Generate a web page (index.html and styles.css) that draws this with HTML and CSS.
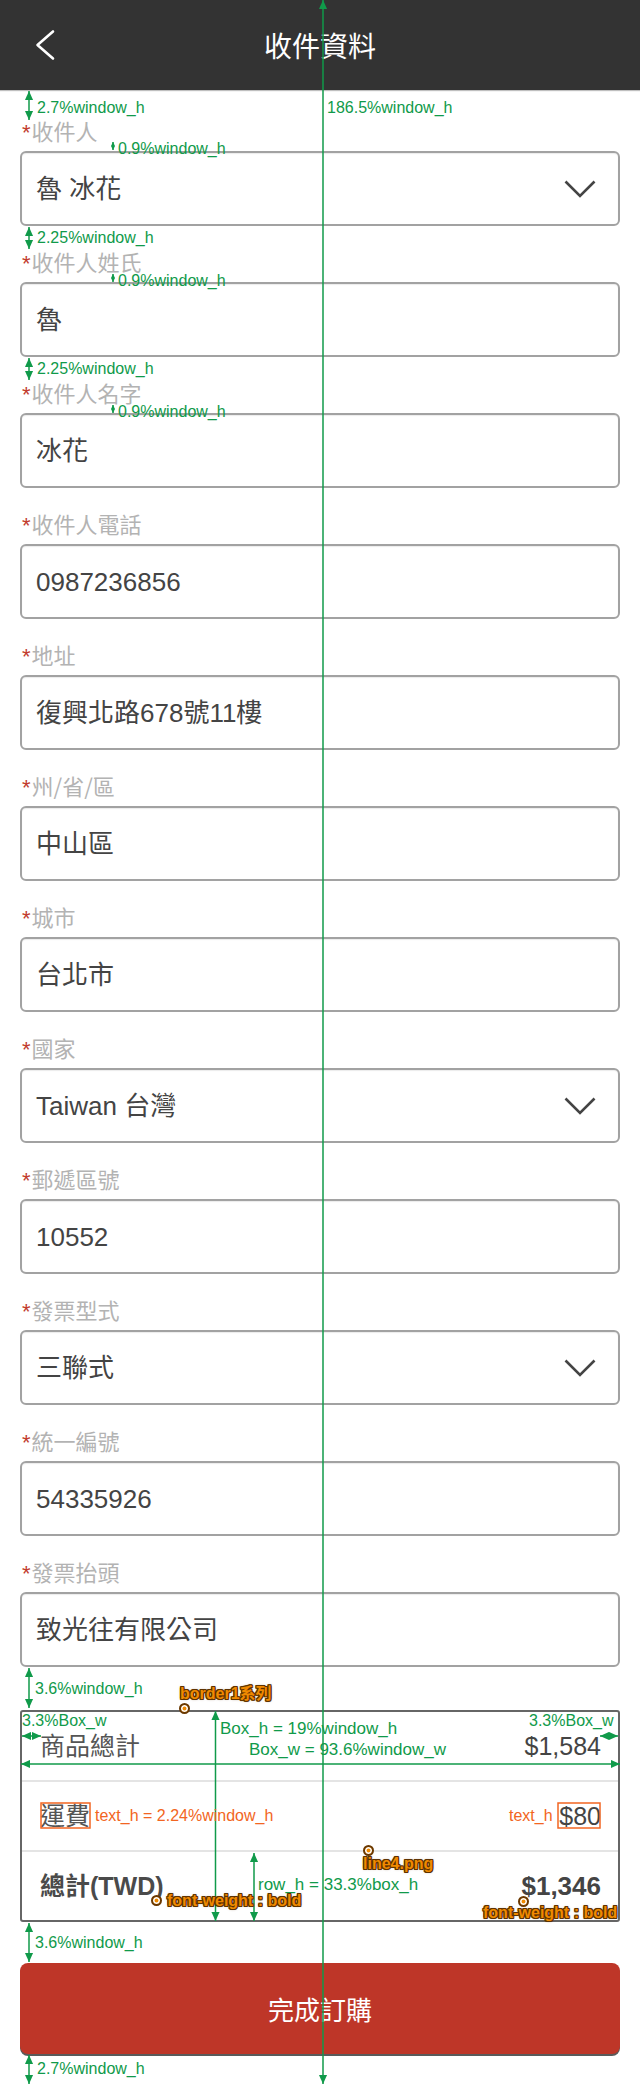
FILE: index.html
```html
<!DOCTYPE html>
<html lang="zh-Hant">
<head>
<meta charset="utf-8">
<title>收件資料</title>
<link rel="stylesheet" href="styles.css">
</head>
<body>
<div class="page">
  <header class="topbar">
    <svg class="back" width="20" height="32" viewBox="0 0 20 32"><polyline points="18,2.5 2.5,16 18,29.5" fill="none" stroke="#fff" stroke-width="2.6" stroke-linecap="round" stroke-linejoin="round"/></svg>
    <h1 class="title">收件資料</h1>
    <span></span>
  </header>

  <main class="form">
    <div class="field">
      <label class="label"><span class="req">*</span>收件人</label>
      <div class="input"><span>魯 冰花</span><svg class="caret" width="32" height="18" viewBox="0 0 32 18"><polyline points="1.5,1.5 16,16 30.5,1.5" fill="none" stroke="#444" stroke-width="2.6"/></svg></div>
    </div>
    <div class="field">
      <label class="label"><span class="req">*</span>收件人姓氏</label>
      <div class="input"><span>魯</span></div>
    </div>
    <div class="field">
      <label class="label"><span class="req">*</span>收件人名字</label>
      <div class="input"><span>冰花</span></div>
    </div>
    <div class="field">
      <label class="label"><span class="req">*</span>收件人電話</label>
      <div class="input"><span>0987236856</span></div>
    </div>
    <div class="field">
      <label class="label"><span class="req">*</span>地址</label>
      <div class="input"><span>復興北路678號11樓</span></div>
    </div>
    <div class="field">
      <label class="label"><span class="req">*</span>州/省/區</label>
      <div class="input"><span>中山區</span></div>
    </div>
    <div class="field">
      <label class="label"><span class="req">*</span>城市</label>
      <div class="input"><span>台北市</span></div>
    </div>
    <div class="field">
      <label class="label"><span class="req">*</span>國家</label>
      <div class="input"><span>Taiwan 台灣</span><svg class="caret" width="32" height="18" viewBox="0 0 32 18"><polyline points="1.5,1.5 16,16 30.5,1.5" fill="none" stroke="#444" stroke-width="2.6"/></svg></div>
    </div>
    <div class="field">
      <label class="label"><span class="req">*</span>郵遞區號</label>
      <div class="input"><span>10552</span></div>
    </div>
    <div class="field">
      <label class="label"><span class="req">*</span>發票型式</label>
      <div class="input"><span>三聯式</span><svg class="caret" width="32" height="18" viewBox="0 0 32 18"><polyline points="1.5,1.5 16,16 30.5,1.5" fill="none" stroke="#444" stroke-width="2.6"/></svg></div>
    </div>
    <div class="field">
      <label class="label"><span class="req">*</span>統一編號</label>
      <div class="input"><span>54335926</span></div>
    </div>
    <div class="field">
      <label class="label"><span class="req">*</span>發票抬頭</label>
      <div class="input"><span>致光往有限公司</span></div>
    </div>
  </main>

  <section class="summary">
    <div class="row"><span class="row-name">商品總計</span><span class="amount">$1,584</span></div>
    <div class="row"><span class="row-name">運費</span><span class="amount">$80</span></div>
    <div class="row total"><span class="row-name">總計(TWD)</span><span class="amount">$1,346</span></div>
  </section>

  <button class="submit" type="button">完成訂購</button>
</div>

<svg class="marks" width="640" height="2084" viewBox="0 0 640 2084">
  <defs>
    <marker id="ah" viewBox="0 0 10 10" refX="10" refY="5" markerWidth="9" markerHeight="9" markerUnits="userSpaceOnUse" orient="auto-start-reverse"><path d="M0,0.5 L10,5 L0,9.5 Z" fill="#109a4a"/></marker>
    <marker id="as" viewBox="0 0 10 10" refX="10" refY="5" markerWidth="4" markerHeight="5" markerUnits="userSpaceOnUse" orient="auto-start-reverse"><path d="M0,0 L10,5 L0,10 Z" fill="#109a4a"/></marker>
  </defs>
  <g stroke="#109a4a" stroke-width="1.5" fill="none">
    <line x1="323" y1="0" x2="323" y2="2084" marker-start="url(#ah)" marker-end="url(#ah)"/>
    <line x1="29" y1="91" x2="29" y2="120" marker-start="url(#ah)" marker-end="url(#ah)"/>
    <line x1="113" y1="142" x2="113" y2="150" marker-start="url(#as)" marker-end="url(#as)"/>
    <line x1="29" y1="227" x2="29" y2="249" marker-start="url(#ah)" marker-end="url(#ah)"/>
    <line x1="113" y1="274" x2="113" y2="282" marker-start="url(#as)" marker-end="url(#as)"/>
    <line x1="29" y1="358" x2="29" y2="380" marker-start="url(#ah)" marker-end="url(#ah)"/>
    <line x1="113" y1="405" x2="113" y2="413" marker-start="url(#as)" marker-end="url(#as)"/>
    <line x1="29" y1="1668" x2="29" y2="1708" marker-start="url(#ah)" marker-end="url(#ah)"/>
    <line x1="22" y1="1736" x2="41" y2="1736" marker-start="url(#ah)" marker-end="url(#ah)"/>
    <line x1="600" y1="1736" x2="618" y2="1736" marker-start="url(#ah)" marker-end="url(#ah)"/>
    <line x1="215.5" y1="1711" x2="215.5" y2="1921" marker-start="url(#ah)" marker-end="url(#ah)"/>
    <line x1="21" y1="1764" x2="620" y2="1764" marker-start="url(#ah)" marker-end="url(#ah)"/>
    <line x1="254" y1="1853" x2="254" y2="1921" marker-start="url(#ah)" marker-end="url(#ah)"/>
    <line x1="29" y1="1923" x2="29" y2="1962" marker-start="url(#ah)" marker-end="url(#ah)"/>
    <line x1="29" y1="2055" x2="29" y2="2084" marker-start="url(#ah)" marker-end="url(#ah)"/>
  </g>
  <g stroke="#f26522" stroke-width="1.5" fill="none">
    <rect x="41" y="1803" width="49" height="25"/>
    <rect x="558" y="1803" width="42" height="25"/>
  </g>
</svg>

<div class="notes">
  <span class="note n186">186.5%window_h</span>
  <span class="note n27a">2.7%window_h</span>
  <span class="note n09a">0.9%window_h</span>
  <span class="note n225a">2.25%window_h</span>
  <span class="note n09b">0.9%window_h</span>
  <span class="note n225b">2.25%window_h</span>
  <span class="note n09c">0.9%window_h</span>
  <span class="note n36a">3.6%window_h</span>
  <span class="note n33l">3.3%Box_w</span>
  <span class="note n33r">3.3%Box_w</span>
  <span class="note big nboxh">Box_h = 19%window_h</span>
  <span class="note big nboxw">Box_w = 93.6%window_w</span>
  <span class="note red nred1">text_h = 2.24%window_h</span>
  <span class="note red nred2">text_h</span>
  <span class="note big nrowh">row_h = 33.3%box_h</span>
  <span class="note n36b">3.6%window_h</span>
  <span class="note n27b">2.7%window_h</span>

  <span class="tag t-border">border1系列</span>
  <span class="tag t-line4">line4.png</span>
  <span class="tag t-fw1">font-weight : bold</span>
  <span class="tag t-fw2">font-weight : bold</span>

  <span class="dot d-border"></span>
  <span class="dot d-line4"></span>
  <span class="dot d-fw1"></span>
  <span class="dot d-fw2"></span>
</div>
</body>
</html>
```

FILE: styles.css
```css
* {
  box-sizing: border-box;
}

body {
  margin: 0;
  width: 640px;
  position: relative;
  background: #ffffff;
  font-family: "Liberation Sans", "Noto Sans CJK TC", sans-serif;
}

.page {
  display: flex;
  flex-direction: column;
  padding-bottom: 31px;
}

/* ---------- top bar ---------- */
.topbar {
  height: 90px;
  flex: none;
  background: #333333;
  display: grid;
  grid-template-columns: 90px 1fr 90px;
  align-items: center;
  box-shadow: 0 1px 1px rgba(0, 0, 0, 0.25);
}

.back {
  display: block;
  margin-left: 35px;
}

.title {
  margin: 0;
  text-align: center;
  color: #ffffff;
  font-family: "Noto Sans CJK TC", sans-serif;
  font-weight: 400;
  font-size: 28px;
  line-height: 40px;
}

/* ---------- form ---------- */
.form {
  display: flex;
  flex-direction: column;
  gap: 20px;
  padding: 25px 20px 0;
}

.field {
  display: flex;
  flex-direction: column;
}

.label {
  display: block;
  height: 30px;
  overflow: visible;
  padding-left: 2px;
  margin-bottom: 6px;
  font-family: "Noto Sans CJK TC", sans-serif;
  font-size: 22px;
  line-height: 30px;
  color: #b3b3b3;
}

.req {
  font-family: "Liberation Sans", sans-serif;
  line-height: 1;
  color: #c23b2e;
  margin-right: 1px;
}

.input {
  height: 75px;
  flex: none;
  border: 2px solid #a2a2a2;
  border-radius: 6px;
  box-shadow: inset 0 1px 1px rgba(0, 0, 0, 0.08);
  display: flex;
  align-items: center;
  justify-content: space-between;
  padding: 0 22px 0 14px;
  font-family: "Liberation Sans", "Noto Sans CJK TC", sans-serif;
  font-size: 26px;
  line-height: 32px;
  color: #444444;
}

.caret {
  display: block;
  flex: none;
}

/* ---------- summary ---------- */
.summary {
  margin: 43px 20px 0;
  border: 2px solid #666666;
  border-radius: 3px;
  display: flex;
  flex-direction: column;
}

.row {
  height: 68px;
  flex: none;
  display: flex;
  align-items: center;
  justify-content: space-between;
  padding: 0 17px 0 18px;
  color: #555555;
  font-size: 25px;
  line-height: 30px;
}

.row + .row {
  height: 70px;
  border-top: 2px solid #e4e4e4;
}

.row-name {
  font-family: "Liberation Sans", "Noto Sans CJK TC", sans-serif;
}

.amount {
  font-family: "Liberation Sans", sans-serif;
  color: #444444;
}

.total {
  font-weight: 700;
}

.total .row-name {
  color: #4a4a4a;
}

.total .amount {
  font-size: 26px;
}

/* ---------- button ---------- */
.submit {
  margin: 41px 20px 0;
  height: 91px;
  flex: none;
  border: 0;
  border-radius: 8px;
  background: #be3628;
  box-shadow: 0 2px 0 #5a5a5a;
  color: #ffffff;
  font-family: "Noto Sans CJK TC", sans-serif;
  font-size: 26px;
  font-weight: 400;
  display: flex;
  align-items: center;
  justify-content: center;
}

/* ---------- spec annotations (overlay) ---------- */
.marks {
  position: absolute;
  left: 0;
  top: 0;
  pointer-events: none;
}

.notes {
  position: absolute;
  left: 0;
  top: 0;
  width: 640px;
  height: 2084px;
  pointer-events: none;
}

.note {
  position: absolute;
  white-space: nowrap;
  font-family: "Liberation Sans", sans-serif;
  font-size: 16px;
  line-height: 16px;
  color: #109a4a;
}

.note.big {
  font-size: 17px;
  line-height: 17px;
}

.note.red {
  color: #f26522;
  font-size: 16px;
}

.n186 { left: 327px; top: 100px; }
.n27a { left: 37px; top: 100px; }
.n09a { left: 118px; top: 141px; }
.n225a { left: 37px; top: 230px; }
.n09b { left: 118px; top: 273px; }
.n225b { left: 37px; top: 361px; }
.n09c { left: 118px; top: 404px; }
.n36a { left: 35px; top: 1681px; }
.n33l { left: 22px; top: 1713px; }
.n33r { left: 529px; top: 1713px; }
.nboxh { left: 220px; top: 1720px; }
.nboxw { left: 249px; top: 1741px; }
.nred1 { left: 95px; top: 1808px; }
.nred2 { left: 509px; top: 1808px; }
.nrowh { left: 258px; top: 1876px; }
.n36b { left: 35px; top: 1935px; }
.n27b { left: 37px; top: 2061px; }

.tag {
  position: absolute;
  white-space: nowrap;
  font-family: "Liberation Sans", "Noto Sans CJK TC", sans-serif;
  font-weight: 700;
  font-size: 16px;
  line-height: 16px;
  color: #f08a00;
  text-shadow:
    -1px -1px 0 #5e3200, 1px -1px 0 #5e3200,
    -1px 1px 0 #5e3200, 1px 1px 0 #5e3200,
    0 -1px 0 #5e3200, 0 1px 0 #5e3200,
    -1px 0 0 #5e3200, 1px 0 0 #5e3200,
    0 0 3px rgba(94, 50, 0, 0.6);
}

.t-border { left: 180px; top: 1686px; }
.t-line4 { left: 363px; top: 1856px; }
.t-fw1 { left: 167px; top: 1893px; }
.t-fw2 { left: 483px; top: 1905px; }

.dot {
  position: absolute;
  width: 11px;
  height: 11px;
  border-radius: 50%;
  background: #f08a00;
  border: 2px solid #6a3800;
  box-shadow: inset 0 0 0 1.5px #ffffff;
}

.d-border { left: 179px; top: 1703px; }
.d-line4 { left: 363px; top: 1845px; }
.d-fw1 { left: 151px; top: 1895px; }
.d-fw2 { left: 518px; top: 1896px; }
```
